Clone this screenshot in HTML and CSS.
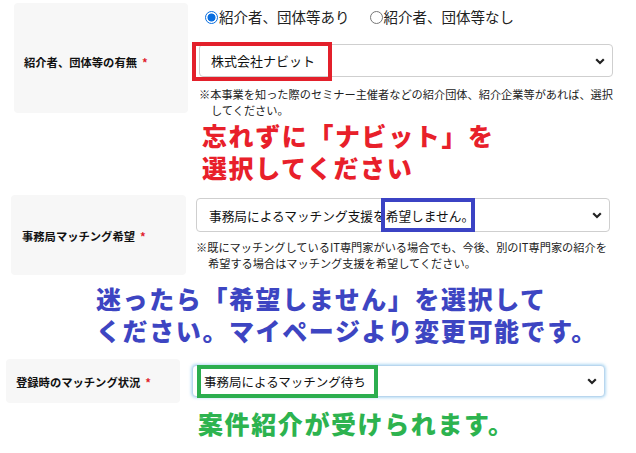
FILE: index.html
```html
<!DOCTYPE html>
<html lang="ja">
<head>
<meta charset="utf-8">
<link rel="stylesheet" href="styles.css">
</head>
<body>
<div class="page">
  <div class="sec sec1">
    <div class="label label1">紹介者、団体等の有無<span class="req">*</span></div>
    <div class="field field1">
      <div class="radios">
        <span class="radio on"></span><span class="rtext">紹介者、団体等あり</span>
        <span class="radio off"></span><span class="rtext">紹介者、団体等なし</span>
      </div>
      <div class="select s1">
        <span>株式会社ナビット</span>
        <svg class="chev" width="10" height="7" viewBox="0 0 10 7"><path d="M1.2 1.3 L5 5 L8.8 1.3" fill="none" stroke="#222" stroke-width="2.2"/></svg>
        <div class="mark red-box"></div>
      </div>
      <div class="hint">※本事業を知った際のセミナー主催者などの紹介団体、紹介企業等があれば、選択<br>してください。</div>
      <div class="callout red"><div>忘れずに「ナビット」を</div><div>選択してください</div></div>
    </div>
  </div>

  <div class="sec sec2">
    <div class="label label2">事務局マッチング希望<span class="req">*</span></div>
    <div class="field field2">
      <div class="select s2">
        <span>事務局によるマッチング支援を希望しません。</span>
        <svg class="chev" width="10" height="7" viewBox="0 0 10 7"><path d="M1.2 1.3 L5 5 L8.8 1.3" fill="none" stroke="#222" stroke-width="2.2"/></svg>
        <div class="mark blue-box"></div>
      </div>
      <div class="hint">※既にマッチングしているIT専門家がいる場合でも、今後、別のIT専門家の紹介を<br>希望する場合はマッチング支援を希望してください。</div>
    </div>
  </div>
  <div class="callout blue"><div>迷ったら「希望しません」を選択して</div><div>ください。マイページより変更可能です。</div></div>

  <div class="sec sec3">
    <div class="label label3">登録時のマッチング状況<span class="req">*</span></div>
    <div class="field field3">
      <div class="select s3">
        <span>事務局によるマッチング待ち</span>
        <svg class="chev" width="10" height="7" viewBox="0 0 10 7"><path d="M1.2 1.3 L5 5 L8.8 1.3" fill="none" stroke="#222" stroke-width="2.2"/></svg>
        <div class="mark green-box"></div>
      </div>
      <div class="callout green">案件紹介が受けられます。</div>
    </div>
  </div>
</div>
</body>
</html>
```

FILE: styles.css
```css
* { box-sizing: border-box; }
html, body { margin: 0; padding: 0; background: #fff; }
body {
  font-family: "Noto Sans CJK JP", "Noto Sans", sans-serif;
  color: #222;
  width: 636px;
  height: 453px;
  overflow: hidden;
}
.page { display: flex; flex-direction: column; }

.sec { display: flex; align-items: flex-start; }
.sec1 { margin-left: 14px; padding-top: 3px; }
.sec2 { margin-left: 11px; margin-top: 12px; }
.sec3 { margin-left: 6px; margin-top: 13px; }

.label {
  background: #f7f7f7;
  border-radius: 4px;
  display: flex;
  align-items: center;
  font-weight: 700;
  font-size: 11.3px;
  color: #111;
  flex: none;
}
.req { color: #e0202a; margin-left: 5px; font-weight: 700; }
.label1 { width: 174px; height: 110px; padding-left: 10px; padding-top: 8px; }
.label2 { width: 175px; height: 80px; padding-left: 11px; padding-top: 2px; }
.label3 { width: 174px; height: 44px; padding-left: 10px; padding-top: 2px; }

.field { display: flex; flex-direction: column; }
.field1 { margin-left: 11px; width: 414px; }
.field2 { margin-left: 10px; width: 414px; padding-top: 3px; }
.field3 { margin-left: 12px; width: 413px; padding-top: 6px; }

.radios {
  display: flex;
  align-items: center;
  height: 28px;
  font-size: 14.5px;
  color: #222;
  padding-left: 6px;
}
.radio {
  width: 13px; height: 13px; border-radius: 50%;
  flex: none;
  margin-right: 1px;
}
.radio.on { border: 1.5px solid #0a6fe0; background: radial-gradient(circle, #0a6fe0 0 3.6px, #fff 4.4px); }
.radio.off { border: 1px solid #777; background: #fff; margin-left: 20px; }
.rtext { line-height: 28px; }

.select {
  position: relative;
  display: flex;
  align-items: center;
  border: 1px solid #cfcfcf;
  border-radius: 4px;
  background: #fff;
  font-size: 12.5px;
  color: #111;
}
.s1 { height: 33px; margin-top: 13px; padding-left: 11px; font-size: 13px; }
.s2 { height: 34px; padding-left: 12px; font-size: 12.7px; }
.s3 { height: 32px; padding-left: 11px; box-shadow: 0 0 3px 1px rgba(120, 190, 235, 0.55); border-color: #b9d6ee; }
.chev { position: absolute; right: 7px; top: 50%; margin-top: -3px; }

.mark { position: absolute; border-style: solid; border-width: 4px; }
.red-box { border-color: #e3202b; left: -8px; top: -3px; width: 140px; height: 39px; }
.blue-box { border-color: #3b43c4; left: 184px; top: -1px; width: 94px; height: 34px; }
.green-box { border-color: #2cae4f; left: 4px; top: -1px; width: 181px; height: 33px; }

.hint {
  font-size: 11.2px;
  line-height: 16px;
  color: #222;
  padding-left: 12px;
  text-indent: -12px;
  white-space: nowrap;
}
.field1 .hint { margin-top: 9px; }
.field2 .hint { margin-top: 7px; }

.callout {
  font-weight: 900;
  font-size: 25px;
  line-height: 32px;
  letter-spacing: 1.6px;
  white-space: nowrap;
}
.callout > div { height: 32px; }
.red { color: #e8202a; margin-top: 1px; margin-left: 3px; }
.blue { color: #3d45c2; margin-left: 96px; margin-top: 7px; }
.green { color: #2db34f; margin-top: 10px; margin-left: 6px; }
```
